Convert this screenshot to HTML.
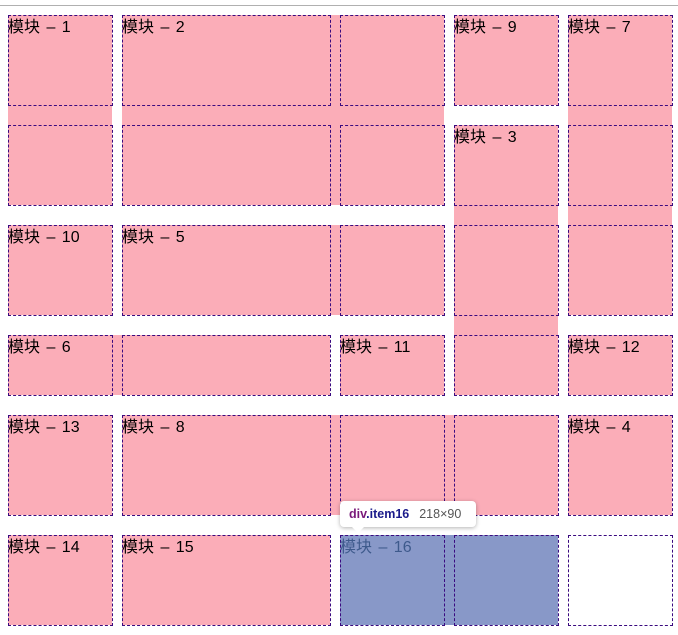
<!DOCTYPE html>
<html><head><meta charset="utf-8"><style>
html,body{margin:0;padding:0;width:678px;height:635px;overflow:hidden;background:#fff;position:relative;font-family:"Liberation Sans","Noto Sans CJK SC",sans-serif;}
.p{position:absolute;background:#fbadb8;}
.c{position:absolute;border:1px dashed #3a0a80;box-sizing:border-box;}
.t{position:absolute;font-size:16px;color:#000;line-height:20px;white-space:nowrap;word-spacing:2px;margin-top:2px;}
.top{position:absolute;left:0;top:5px;width:678px;height:1px;background:#b0b0b0;}
.tip{position:absolute;left:340px;top:501px;width:136px;height:26px;background:#fff;border-radius:4px;box-shadow:0 1px 4px rgba(0,0,0,.3);font-size:12.5px;line-height:26px;padding-left:9px;box-sizing:border-box;}
.tip:after{content:"";position:absolute;left:12px;bottom:-6px;border:6px solid transparent;border-top-color:#fff;border-bottom:0;}
</style></head><body>
<div class="top"></div>
<div class="p" style="left:8px;top:15px;width:104px;height:190px"></div>
<div class="p" style="left:122px;top:15px;width:322px;height:190px"></div>
<div class="p" style="left:454px;top:15px;width:104px;height:90px"></div>
<div class="p" style="left:568px;top:15px;width:104px;height:300px"></div>
<div class="p" style="left:454px;top:125px;width:104px;height:270px"></div>
<div class="p" style="left:8px;top:225px;width:104px;height:90px"></div>
<div class="p" style="left:122px;top:225px;width:322px;height:90px"></div>
<div class="p" style="left:8px;top:335px;width:322px;height:60px"></div>
<div class="p" style="left:340px;top:335px;width:104px;height:60px"></div>
<div class="p" style="left:568px;top:335px;width:104px;height:60px"></div>
<div class="p" style="left:8px;top:415px;width:104px;height:100px"></div>
<div class="p" style="left:122px;top:415px;width:436px;height:100px"></div>
<div class="p" style="left:568px;top:415px;width:104px;height:100px"></div>
<div class="p" style="left:8px;top:535px;width:104px;height:90px"></div>
<div class="p" style="left:122px;top:535px;width:208px;height:90px"></div>
<div class="p" style="left:340px;top:535px;width:218px;height:90px;background:#8898c8"></div>
<div id="g"></div>
<script>
var cols=[[8,105],[122,209],[340,105],[454,105],[568,105]];
var rows=[[15,91],[125,81],[225,91],[335,61],[415,101],[535,91]];
var h="";
rows.forEach(function(r){cols.forEach(function(c){h+='<div class="c" style="left:'+c[0]+'px;top:'+r[0]+'px;width:'+c[1]+'px;height:'+r[1]+'px"></div>';});});
document.getElementById("g").outerHTML=h;
</script>
<div class="t" style="left:8px;top:16px">模块 – 1</div>
<div class="t" style="left:122px;top:16px">模块 – 2</div>
<div class="t" style="left:454px;top:16px">模块 – 9</div>
<div class="t" style="left:568px;top:16px">模块 – 7</div>
<div class="t" style="left:454px;top:126px">模块 – 3</div>
<div class="t" style="left:8px;top:226px">模块 – 10</div>
<div class="t" style="left:122px;top:226px">模块 – 5</div>
<div class="t" style="left:8px;top:336px">模块 – 6</div>
<div class="t" style="left:340px;top:336px">模块 – 11</div>
<div class="t" style="left:568px;top:336px">模块 – 12</div>
<div class="t" style="left:8px;top:416px">模块 – 13</div>
<div class="t" style="left:122px;top:416px">模块 – 8</div>
<div class="t" style="left:568px;top:416px">模块 – 4</div>
<div class="t" style="left:8px;top:536px">模块 – 14</div>
<div class="t" style="left:122px;top:536px">模块 – 15</div>
<div class="t" style="left:340px;top:536px;color:#3e5a8c">模块 – 16</div>
<div class="tip"><b style="color:#7a1a7a">div</b><b style="color:#1a1a8a">.item16</b><span style="color:#555;margin-left:10px">218×90</span></div>
</body></html>
